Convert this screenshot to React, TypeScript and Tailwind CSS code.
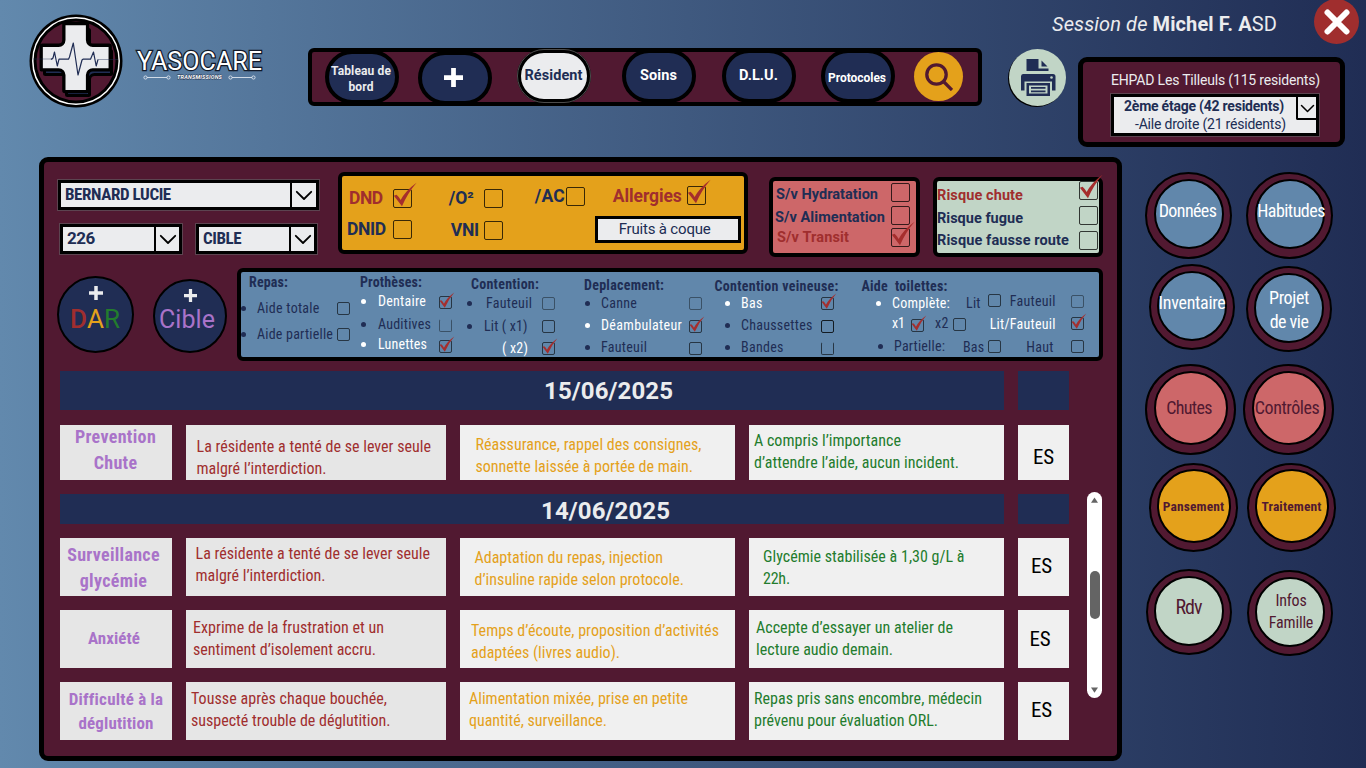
import { useLayoutEffect, useRef, useState, type ReactNode } from "react";

const COND = "[font-family:'Roboto_Condensed',Roboto,sans-serif]";
const ROBOTO = "[font-family:Roboto,sans-serif]";

/** Single line of text tracked so that it spans exactly `w` pixels. */
function Fit({ w, className = "", children }: { w: number; className?: string; children: ReactNode }) {
  const ref = useRef<HTMLSpanElement>(null);
  const [spacing, setSpacing] = useState(0);
  useLayoutEffect(() => {
    const el = ref.current;
    if (!el) return;
    el.style.letterSpacing = "0px";
    const natural = el.getBoundingClientRect().width;
    const count = (el.textContent || "").length;
    const next = count > 1 ? (w - natural) / (count - 0.5) : 0;
    el.style.letterSpacing = `${next}px`;
    setSpacing(next);
  }, [w]);
  return (
    <span ref={ref} className={`inline-block shrink-0 whitespace-pre ${className}`} style={{ letterSpacing: spacing }}>
      {children}
    </span>
  );
}

function Box({ on = false, size = "size-[19px]", className = "", line = "border-black/75" }: { on?: boolean; size?: string; className?: string; line?: string }) {
  return (
    <span className={`relative block shrink-0 rounded-[2px] border ${line} ${size} ${className}`}>
      {on && (
        <svg viewBox="0 -8 28 28" className="absolute -left-px -top-[45%] h-[145%] w-[145%] overflow-visible">
          <path d="M1 7.5 L4 6.5 Q7 9 8.7 12.5 Q14 2 26.8 -7.2 Q17 4 10.2 19.5 Z" fill="#a52e2d" />
        </svg>
      )}
    </span>
  );
}

function Chevron({ className = "" }: { className?: string }) {
  return (
    <svg viewBox="0 0 20 12" className={className} fill="none" stroke="#000" strokeWidth="2" strokeLinecap="round" strokeLinejoin="round">
      <path d="M2 2 L10 10 L18 2" />
    </svg>
  );
}

function Select({ label, w, className = "", arrow = "w-[25px]", font = COND }: { label: string; w: number; className?: string; arrow?: string; font?: string }) {
  return (
    <div className={`flex shrink-0 border-4 border-black bg-[#ebecee] outline outline-1 -outline-offset-1 outline-[#5c4450] ${className}`}>
      <div className={`flex min-w-0 flex-1 items-center pl-1 text-[17px] font-bold text-[#202d54] ${font}`}>
        <Fit w={w}>{label}</Fit>
      </div>
      <div className={`flex items-center justify-center border-l-2 border-black ${arrow}`}>
        <Chevron className="w-[18px]" />
      </div>
    </div>
  );
}

function Plus({ className = "" }: { className?: string }) {
  return (
    <svg viewBox="0 0 20 20" className={className} fill="none" stroke="currentColor" strokeWidth="5">
      <path d="M10 0V20M0 10H20" />
    </svg>
  );
}

const CROSS =
  "M35.5 11h21a1 1 0 0 1 1 1v15a5 5 0 0 0 5 5h16a1 1 0 0 1 1 1v22a1 1 0 0 1-1 1h-16a5 5 0 0 0-5 5v15a1 1 0 0 1-1 1h-21a1 1 0 0 1-1-1v-15a5 5 0 0 0-5-5h-16a1 1 0 0 1-1-1v-22a1 1 0 0 1 1-1h16a5 5 0 0 0 5-5v-15a1 1 0 0 1 1-1z";

function Logo() {
  return (
    <svg viewBox="0 0 94 94" className="ml-[29px] mt-[14px] size-[94px] shrink-0">
      <circle cx="47" cy="47" r="46.5" fill="#000" />
      <circle cx="47" cy="47" r="43.2" fill="#000" stroke="#fff" strokeWidth="1.5" />
      <circle cx="47" cy="47" r="39.5" fill="#511931" />
      <path d={CROSS} transform="translate(3 4.500)" fill="#202d54" stroke="#000" strokeWidth="3" />
      <path d={CROSS} transform="translate(46.700 43.600) scale(1.030) translate(-46 -44)" fill="#ebecee" stroke="#000" strokeWidth="3.200" />
      <path d="M4 45H24M69 45.500H89" fill="none" stroke="#202d54" strokeOpacity="0.600" strokeWidth="0.700" />
      <path d="M22 45.500 24 44 25.500 38 28.300 52 30 45.200H39.500L40.500 43 44.300 29 49 61 53 46 54 45.200H61.500L64.500 38 67.200 52 69 45.500" fill="none" stroke="#202d54" strokeWidth="1.200" strokeLinejoin="round" />
    </svg>
  );
}

function Ornament() {
  return (
    <svg viewBox="0 0 28 5" className="h-[5px] w-[28px]" fill="none" stroke="#dfe5ee" strokeWidth="0.9">
      <circle cx="2.500" cy="2.500" r="1.600" />
      <circle cx="25.500" cy="2.500" r="1.600" />
      <path d="M4 2.500H24" />
    </svg>
  );
}

function Pill({ className, children }: { className: string; children: ReactNode }) {
  return (
    <button className={`flex h-[54px] w-[74px] shrink-0 flex-col items-center justify-center rounded-[27px] border-4 border-black font-bold ${ROBOTO} ${className}`}>
      {children}
    </button>
  );
}

function Printer() {
  return (
    <svg viewBox="0 0 36 38" className="h-[38px] w-[36px]" fill="#202d54">
      <path d="M6.500 0H18.500V9.500H28.500V12H6.500Z" />
      <path d="M21.500 1.500 27.500 7.500H21.500Z" />
      <path d="M3 15H33a2.500 2.500 0 0 1 2.500 2.500V31.500H32V22.500H4.500V31.500H1V17.500A2.500 2.500 0 0 1 3 15Z" />
      <circle cx="31.500" cy="18.500" r="1.300" fill="#c1d5c6" />
      <path d="M6.500 24H30V37H6.500Z" />
      <path d="M9 26.500H27.500V34.500H9Z" fill="#c1d5c6" />
      <path d="M11 28H25.500V29.800H11ZM11 31.500H25.500V33.200H11Z" />
    </svg>
  );
}

function Header() {
  return (
    <header className="flex h-[157px] shrink-0 items-start">
      <Logo />
      <div className="ml-[14px] mt-[47px] w-[126px] shrink-0">
        <div className={`h-[30px] text-[25px] leading-[30px] text-white [-webkit-text-stroke:2.5px_#111827] [paint-order:stroke_fill] ${ROBOTO}`}>
          <Fit w={125}>YASOCARE</Fit>
        </div>
        <div className="-mt-[2px] flex h-[5px] items-center pl-[6px]">
          <Ornament />
          <span className={`ml-[6px] text-[5.5px] font-bold italic leading-[5px] text-white [-webkit-text-stroke:0.8px_#26344f] [paint-order:stroke_fill] ${ROBOTO}`}>
            <Fit w={45}>TRANSMISSIONS</Fit>
          </span>
          <span className="ml-[6px] flex">
            <Ornament />
          </span>
        </div>
      </div>
      <nav className="ml-[45px] mt-[48px] flex h-[58px] w-[674px] shrink-0 rounded-[6px] border-4 border-black bg-[#511931]">
        <Pill className="-mt-[2px] ml-[13px] bg-[#202d54] pr-[2px] pt-[3px] text-[12px] leading-4 text-[#ebecee]">
          <Fit w={60}>Tableau de</Fit>
          <Fit w={25}>bord</Fit>
        </Pill>
        <Pill className="-mt-[1px] ml-[19px] bg-[#202d54] pb-[2px] pr-[3px] text-white">
          <Plus className="size-[19px]" />
        </Pill>
        <Pill className="-mt-[3px] ml-[25px] bg-[#ebecee] pr-px text-[14.5px] leading-4 text-[#202d54] outline outline-1 -outline-offset-1 outline-[#4c4c4c]">
          <Fit w={58}>Résident</Fit>
        </Pill>
        <Pill className="-mt-[3px] ml-[31px] bg-[#202d54] pr-px text-[14.5px] leading-4 text-white">
          <Fit w={37}>Soins</Fit>
        </Pill>
        <Pill className="-mt-[3px] ml-[26px] bg-[#202d54] pr-px text-[14.5px] leading-4 text-white">
          <Fit w={39}>D.L.U.</Fit>
        </Pill>
        <Pill className="-mt-[3px] ml-[25px] bg-[#202d54] pr-[2px] pt-[3px] text-[12px] leading-4 text-white">
          <Fit w={58}>Protocoles</Fit>
        </Pill>
        <button className="ml-[19px] flex size-[49px] shrink-0 items-center justify-center rounded-full bg-[#e4a11b]">
          <svg viewBox="0 0 28 28" className="size-[28px]" fill="none" stroke="#511931" strokeWidth="3.300">
            <circle cx="11.500" cy="11.500" r="9.700" />
            <path d="M18.500 18.500 27 27" />
          </svg>
        </button>
      </nav>
      <div className="ml-[26px] w-[358px] shrink-0">
        <div className="flex h-[45px]">
          <div className={`ml-[44px] w-[225px] pt-[10px] text-[20px] leading-7 text-[#ebecee] ${ROBOTO}`}>
            <Fit w={225}>
              <em>Session de </em>
              <b>Michel F. A</b>SD
            </Fit>
          </div>
          <button className="-mt-[1px] ml-[37px] flex size-[45px] items-center justify-center rounded-full bg-[#a02e2e]">
            <svg viewBox="0 0 26 26" className="size-[26px]" stroke="#fff" strokeWidth="6" strokeLinecap="round">
              <path d="M3.500 3.500 22.500 22.500M22.500 3.500 3.500 22.500" />
            </svg>
          </button>
        </div>
        <div className="flex items-start">
          <button className="ml-[1px] mt-[4px] flex size-[57px] shrink-0 items-center justify-center rounded-full bg-[#c1d5c6] shadow-[-1px_1px_0_#000]">
            <Printer />
          </button>
          <section className="ml-[12px] mt-[12px] h-[90px] w-[267px] shrink-0 rounded-[9px] border-[5px] border-black bg-[#511931] pl-[27px] pt-[8px]">
            <div className={`h-[23px] pl-[1px] text-[14px] leading-[21px] text-[#ebecee] ${ROBOTO}`}>
              <Fit w={209}>EHPAD Les Tilleuls (115 residents)</Fit>
            </div>
            <div className={`flex h-[44px] w-[210px] border-4 border-black bg-[#ebecee] text-[14px] text-[#202d54] outline outline-1 -outline-offset-1 outline-[#5c4450] ${ROBOTO}`}>
              <div className="flex w-[182px] shrink-0 flex-col items-start pl-[10px] leading-[18px]">
                <Fit w={160} className="font-bold">2ème étage (42 residents)</Fit>
                <Fit w={151} className="ml-[11px]">-Aile droite (21 résidents)</Fit>
              </div>
              <div className="-mt-px flex h-[24px] w-[21px] items-center justify-center rounded-bl-[2px] border-b-2 border-l-2 border-t border-black">
                <Chevron className="mt-px w-[15px]" />
              </div>
            </div>
          </section>
        </div>
      </div>
    </header>
  );
}

function Alerts() {
  return (
    <section className={`ml-[18px] mt-[10px] h-[82px] w-[410px] shrink-0 rounded-[6px] border-4 border-black bg-[#e4a11b] text-[17.5px] font-bold leading-5 text-[#202d54] ${ROBOTO}`}>
      <div className="flex h-[40px] items-center pt-[4px]">
        <Fit w={34} className="ml-[7px] text-[#a02e2e]">DND</Fit>
        <Box on className="ml-[10px]" />
        <Fit w={25} className="-mt-px ml-[37px]">/O²</Fit>
        <Box className="ml-[10px]" />
        <Fit w={30} className="-mt-[4px] ml-[32px]">/AC</Fit>
        <Box className="-mt-[4px] ml-[1px]" />
        <Fit w={69} className="-mt-[5px] ml-[28px] text-[#a02e2e]">Allergies</Fit>
        <Box on className="-mt-[6px] ml-[5px]" />
      </div>
      <div className="flex h-[27px] items-center">
        <Fit w={39} className="-mt-[2px] ml-[5px]">DNID</Fit>
        <Box className="ml-[7px]" />
        <Fit w={28} className="ml-[39px]">VNI</Fit>
        <Box className="ml-[5px] mt-[2px]" />
        <div className="ml-[92px] flex h-[27px] w-[146px] items-center justify-center border-[3px] border-black bg-[#ebecee] pb-[2px] pr-[6px] text-[15px] font-normal">
          <Fit w={92}>Fruits à coque</Fit>
        </div>
      </div>
    </section>
  );
}

function Watch() {
  return (
    <section className={`ml-[21px] mt-[15px] flex h-[80px] w-[151px] shrink-0 rounded-[6px] border-4 border-black bg-[#cd6769] text-[14.5px] font-bold leading-5 text-[#202d54] ${ROBOTO}`}>
      <div className="flex w-[118px] shrink-0 flex-col items-start pl-[2px] pt-[4px]">
        <Fit w={102} className="ml-px">S/v Hydratation</Fit>
        <Fit w={110} className="mt-[3px]">S/v Alimentation</Fit>
        <Fit w={72} className="ml-[2px] text-[#a02e2e]">S/v Transit</Fit>
      </div>
      <div className="flex flex-col gap-[3.500px] pt-[2px]">
        <Box />
        <Box />
        <Box on />
      </div>
    </section>
  );
}

function Risks() {
  return (
    <section className={`ml-[13px] mt-[15px] flex h-[80px] w-[170px] shrink-0 rounded-[6px] border-4 border-black bg-[#c1d5c6] text-[14.5px] font-bold leading-5 text-[#202d54] ${ROBOTO}`}>
      <div className="flex w-[142px] shrink-0 flex-col items-start pt-[5px]">
        <Fit w={86} className="text-[#a02e2e]">Risque chute</Fit>
        <Fit w={86} className="mt-[3px]">Risque fugue</Fit>
        <Fit w={132} className="mt-[2px]">Risque fausse route</Fit>
      </div>
      <div className="flex flex-col gap-[6px]">
        <Box on />
        <Box />
        <Box />
      </div>
    </section>
  );
}

function Dot({ className = "" }: { className?: string }) {
  return <span className={`block size-[5px] shrink-0 rounded-full bg-current ${className}`} />;
}

type Item = { text: string; w: number; on?: boolean; dot?: string; gap?: string; row: string; box?: string; line?: string };

function Group({ title, tw, className, titleClass, items, end }: { title: string; tw: number; className: string; titleClass: string; items: Item[]; end: string }) {
  return (
    <div className={`flex shrink-0 flex-col ${className}`}>
      <div className={`flex h-5 shrink-0 items-center font-bold ${titleClass}`}>
        <Fit w={tw}>{title}</Fit>
      </div>
      {items.map((it) => (
        <div key={it.text} className={`flex h-5 shrink-0 items-center ${it.row} ${end} ${it.on ? "text-white" : ""}`}>
          {it.dot !== "none" && <Dot className={it.dot} />}
          <Fit w={it.w} className={it.gap || "ml-[11px]"}>{it.text}</Fit>
          <Box on={it.on} size="size-[13px]" className={`ml-auto ${it.box || ""}`} line={it.line || "border-black/60"} />
        </div>
      ))}
    </div>
  );
}

function Care() {
  const s = "size-[13px]";
  const l = "border-black/60";
  return (
    <section className={`ml-[10px] flex h-[93px] w-[866px] shrink-0 rounded-[6px] border-4 border-black bg-[#6187ab] text-[14px] leading-5 text-[#202d54] ${COND}`}>
      <Group title="Repas:" tw={39} className="w-[119px]" titleClass="pl-[8px]" end="pr-[10px]" items={[
        { text: "Aide totale", w: 62.5, row: "mt-[6px]" },
        { text: "Aide partielle", w: 76, row: "mt-[6px]" },
      ]} />
      <Group title="Prothèses:" tw={62} className="w-[107px]" titleClass="" end="pl-[1px] pr-[15px]" items={[
        { text: "Dentaire", w: 48, on: true, row: "-mt-[1px]", gap: "ml-[12px]", box: "mt-[2px]" },
        { text: "Auditives", w: 53, row: "mt-[3px]", gap: "ml-[12px]", line: "border-black/40 border-t-transparent", box: "mt-[2px]" },
        { text: "Lunettes", w: 49, on: true, row: "", gap: "ml-[12px]", box: "mt-[4px]" },
      ]} />
      <Group title="Contention:" tw={68} className="w-[117px]" titleClass="mt-[2px] pl-[4px]" end="pl-[0px] pr-[29px]" items={[
        { text: "Fauteuil", w: 46, row: "-mt-[1px]", gap: "ml-[14px]", line: "border-black/40", box: "mt-[1px]" },
        { text: "Lit ( x1)", w: 43.5, row: "mt-[3px]", gap: "ml-[12px]" },
        { text: "( x2)", w: 26, on: true, row: "mt-[2px]", dot: "none", gap: "ml-[35px]" },
      ]} />
      <Group title="Deplacement:" tw={80} className="w-[130px]" titleClass="mt-[3px]" end="pl-[1px] pr-[12px]" items={[
        { text: "Canne", w: 36, row: "-mt-[2px]", line: "border-black/40", box: "mt-[1px]" },
        { text: "Déambulateur", w: 81, on: true, row: "mt-[2px]", box: "mt-[3px]" },
        { text: "Fauteuil", w: 46, row: "mt-[2px]", box: "mt-[2px]" },
      ]} />
      <Group title="Contention veineuse:" tw={124} className="w-[147px]" titleClass="mt-[4px] pl-[0.500px]" end="pl-[11px] pr-[27px]" items={[
        { text: "Bas", w: 21.5, on: true, row: "-mt-[3px]", box: "mt-[1px]" },
        { text: "Chaussettes", w: 71.5, row: "mt-[2px]", box: "mt-[3px]", line: "border-black/80" },
        { text: "Bandes", w: 42.5, row: "mt-[2px]", line: "border-black/60 border-t-transparent", box: "mt-[3px]" },
      ]} />
      <div className="flex w-[238px] shrink-0 flex-col">
        <div className="mt-[4px] flex h-5 shrink-0 items-center pl-[0.500px] font-bold">
          <Fit w={86}>Aide  toilettes:</Fit>
        </div>
        <div className="-mt-[3px] flex h-5 shrink-0 items-center pl-[15px]">
          <Dot className="text-white" />
          <Fit w={58} className="ml-[11px] text-white">Complète:</Fit>
          <Fit w={14.5} className="ml-[16px]">Lit</Fit>
          <Box size={s} line={l} className="-mt-[5px] ml-[7px]" />
          <Fit w={46} className="-mt-[4px] ml-[9px]">Fauteuil</Fit>
          <Box size={s} line="border-black/40" className="-mt-[4px] ml-[15px]" />
        </div>
        <div className="flex h-5 shrink-0 items-center pl-[31px] text-white">
          <Fit w={13}>x1</Fit>
          <Box on size={s} line={l} className="ml-[6px] mt-[5px]" />
          <Fit w={13.5} className="ml-[11px] text-[#202d54]">x2</Fit>
          <Box size={s} line={l} className="ml-[4px] mt-[3px]" />
          <Fit w={66} className="ml-[24px] mt-[1px]">Lit/Fauteuil</Fit>
          <Box on size={s} line={l} className="ml-[15px] mt-[1px]" />
        </div>
        <div className="mt-[3px] flex h-5 shrink-0 items-center pl-[17px]">
          <Dot />
          <Fit w={51} className="ml-[11px]">Partielle:</Fit>
          <Fit w={21} className="ml-[18px] mt-[2px]">Bas</Fit>
          <Box size={s} line={l} className="ml-[4px]" />
          <Fit w={27.5} className="ml-[25px] mt-[2px]">Haut</Fit>
          <Box size={s} line={l} className="ml-[17px]" />
        </div>
      </div>
    </section>
  );
}

function Banner({ date, className, w }: { date: string; className: string; w: string }) {
  return (
    <div className={`flex shrink-0 gap-[14px] ${className}`}>
      <div className={`flex w-[944px] items-center bg-[#202d54] text-[24px] font-bold leading-none text-[#ebecee] ${ROBOTO} ${w}`}>
        <Fit w={129}>{date}</Fit>
      </div>
      <div className="w-[51px] bg-[#202d54]" />
    </div>
  );
}

type Line = [string, number];
type Entry = {
  row: string;
  topic: { cls: string; lines: Line[] };
  data: { cls: string; lines: Line[] };
  action: { cls: string; lines: Line[] };
  result: { cls: string; lines: Line[] };
  sign: string;
};

const ENTRIES: Entry[] = [
  {
    row: "mt-[14.500px] h-[55px]",
    topic: { cls: "pr-px text-[18px] leading-[26px] -mt-[5px]", lines: [["Prevention", 81], ["Chute", 43.5]] },
    data: { cls: "pl-[10.500px] pt-[11px]", lines: [["La résidente a tenté de se lever seule", 234.5], ["malgré l’interdiction.", 130]] },
    action: { cls: "pl-[15.500px] pt-[9px]", lines: [["Réassurance, rappel des consignes,", 226], ["sonnette laissée à portée de main.", 217.5]] },
    result: { cls: "pl-[5px] pt-[5px]", lines: [["A compris l’importance", 147], ["d’attendre l’aide, aucun incident.", 205]] },
    sign: "pl-[15px] pt-[9px]",
  },
  {
    row: "mt-[14px] h-[58px]",
    topic: { cls: "pr-[5px] pt-[2px] text-[18px] leading-[26px]", lines: [["Surveillance", 92.5], ["glycémie", 67.5]] },
    data: { cls: "pl-[9.500px] pt-[5px]", lines: [["La résidente a tenté de se lever seule", 234.5], ["malgré l’interdiction.", 130]] },
    action: { cls: "pl-[14.500px] pt-[9px]", lines: [["Adaptation du repas, injection", 188.5], ["d’insuline rapide selon protocole.", 209.5]] },
    result: { cls: "pl-[14px] pt-[8px]", lines: [["Glycémie stabilisée à 1,30 g/L à", 201.5], ["22h.", 27]] },
    sign: "pl-[13px] pb-[2px]",
  },
  {
    row: "mt-[14px] h-[58px]",
    topic: { cls: "pr-[4px] pb-px text-[17px] leading-6", lines: [["Anxiété", 52]] },
    data: { cls: "pl-[7px] pt-[7px]", lines: [["Exprime de la frustration et un", 191], ["sentiment d’isolement accru.", 183]] },
    action: { cls: "pl-[11px] pt-[10px]", lines: [["Temps d’écoute, proposition d’activités", 248], ["adaptées (livres audio).", 149]] },
    result: { cls: "pl-[7px] pt-[7px]", lines: [["Accepte d’essayer un atelier de", 197], ["lecture audio demain.", 137]] },
    sign: "pl-[11.500px]",
  },
  {
    row: "mt-[14px] h-[58px]",
    topic: { cls: "text-[17px] leading-6", lines: [["Difficulté à la", 93], ["déglutition", 75]] },
    data: { cls: "pl-[5px] pt-[6px]", lines: [["Tousse après chaque bouchée,", 196], ["suspecté trouble de déglutition.", 199.5]] },
    action: { cls: "pl-[9px] pt-[6px]", lines: [["Alimentation mixée, prise en petite", 219], ["quantité, surveillance.", 138]] },
    result: { cls: "pl-[5px] pt-[6px]", lines: [["Repas pris sans encombre, médecin", 228], ["prévenu pour évaluation ORL.", 184]] },
    sign: "pl-[13px] pb-[2px]",
  },
];

function Lines({ lines }: { lines: Line[] }) {
  return (
    <>
      {lines.map(([text, w]) => (
        <Fit key={text} w={w}>{text}</Fit>
      ))}
    </>
  );
}

function Row({ e }: { e: Entry }) {
  return (
    <div className={`flex shrink-0 text-[16px] leading-[22px] ${COND} ${e.row}`}>
      <div className="flex w-[112px] flex-col bg-[#e6e6e6]">
        <div className={`flex flex-1 flex-col items-center justify-center font-bold text-[#a973c9] ${e.topic.cls}`}>
          <Lines lines={e.topic.lines} />
        </div>
      </div>
      <div className={`ml-[14px] flex w-[260px] flex-col items-start bg-[#e6e6e6] text-[#a02e2e] ${e.data.cls}`}>
        <Lines lines={e.data.lines} />
      </div>
      <div className={`ml-[14px] flex w-[275px] flex-col items-start bg-[#f0f0f0] text-[#e4a11b] ${e.action.cls}`}>
        <Lines lines={e.action.lines} />
      </div>
      <div className={`ml-[14px] flex w-[255px] flex-col items-start bg-[#f0f0f0] text-[#237c2d] ${e.result.cls}`}>
        <Lines lines={e.result.lines} />
      </div>
      <div className={`ml-[14px] flex w-[51px] items-center bg-[#f0f0f0] text-[21px] text-black ${e.sign}`}>
        <Fit w={21}>ES</Fit>
      </div>
    </div>
  );
}

function Journal() {
  return (
    <div className="mt-[10px] flex pl-[16px]">
      <div className="flex w-[1009px] shrink-0 flex-col">
        <Banner date="15/06/2025" className="h-[39px]" w="pl-[484px]" />
        <Row e={ENTRIES[0]} />
        <Banner date="14/06/2025" className="mt-[14px] h-[30px]" w="pl-[481px] pt-[5px]" />
        {ENTRIES.slice(1).map((e) => (
          <Row key={e.topic.lines[0][0]} e={e} />
        ))}
      </div>
      <div className="ml-[18px] mt-[121px] flex h-[206px] w-[15px] shrink-0 flex-col items-center rounded-full bg-white py-[5px]">
        <svg viewBox="0 0 8 6" className="h-[6px] w-[7px]" fill="#646464"><path d="M4 0 8 6H0Z" /></svg>
        <div className="mt-[68px] h-[48px] w-[10px] rounded-full bg-[#646464]" />
        <svg viewBox="0 0 8 6" className="mt-auto h-[6px] w-[7px]" fill="#646464"><path d="M0 0H8L4 6Z" /></svg>
      </div>
    </div>
  );
}

function Orb({ className, inner, children }: { className: string; inner: string; children: ReactNode }) {
  return (
    <button className={`flex shrink-0 justify-center rounded-full border-2 border-black bg-[#511931] ${COND} ${className}`}>
      <span className={`flex shrink-0 flex-col items-center justify-center rounded-full border-2 border-black ${inner}`}>{children}</span>
    </button>
  );
}

function Sidebar() {
  const blue = "mt-[5px] size-[70px] bg-[#6187ab] text-white";
  return (
    <aside className="w-[245px] shrink-0 text-[18px] leading-6">
      <div className="mt-[15px] flex h-[87px] items-start pl-[23px]">
        <Orb className="size-[87px]" inner={`${blue} pb-[6px] pr-[2px]`}><Fit w={58}>Données</Fit></Orb>
        <Orb className="ml-[14px] size-[87px]" inner={`${blue} pb-[6px] pl-[3px]`}><Fit w={68}>Habitudes</Fit></Orb>
      </div>
      <div className="mt-[5px] flex h-[89px] items-start pl-[27px]">
        <Orb className="size-[86px]" inner={`${blue} pb-[6px]`}><Fit w={67}>Inventaire</Fit></Orb>
        <Orb className="ml-[11px] mt-[2px] size-[86px]" inner={`${blue} pt-[4px]`}><Fit w={40}>Projet</Fit><Fit w={39}>de vie</Fit></Orb>
      </div>
      <div className="mt-[11px] flex h-[91px] items-start pl-[23px]">
        <Orb className="size-[91px]" inner="mt-[5px] size-[74px] bg-[#cd6769] pr-[3px] text-[#511931]"><Fit w={46}>Chutes</Fit></Orb>
        <Orb className="ml-[7px] size-[91px]" inner="mt-[5px] size-[74px] bg-[#cd6769] pr-[3px] text-[#511931]"><Fit w={64.5}>Contrôles</Fit></Orb>
      </div>
      <div className="mt-[8px] flex h-[89px] items-start pl-[27px] text-[13.5px] font-bold">
        <Orb className="size-[89px]" inner="mt-[4px] size-[74px] bg-[#e4a11b] text-[#511931]"><Fit w={61.5}>Pansement</Fit></Orb>
        <Orb className="ml-[9px] size-[89px]" inner="mt-[4px] size-[74px] bg-[#e4a11b] text-[#511931]"><Fit w={60}>Traitement</Fit></Orb>
      </div>
      <div className="mt-[17px] flex items-start pl-[24px]">
        <Orb className="size-[86px] text-[20px]" inner="mt-[5px] size-[70px] bg-[#c1d5c6] pb-[8px] pr-px text-[#511931]"><Fit w={26.5}>Rdv</Fit></Orb>
        <Orb className="ml-[15px] mt-[1px] size-[86px] text-[16px] leading-[22px]" inner="mt-[5px] size-[70px] bg-[#c1d5c6] pl-[2px] text-[#511931]"><Fit w={31}>Infos</Fit><Fit w={44.5}>Famille</Fit></Orb>
      </div>
    </aside>
  );
}

export default function App() {
  return (
    <div className="flex h-[768px] w-[1366px] flex-col overflow-hidden bg-linear-to-r from-[#6289ad] to-[#202d54]">
      <Header />
      <div className="flex min-h-0 flex-1 items-start">
        <main className="ml-[39px] h-[604px] w-[1083px] shrink-0 rounded-[9px] border-[5px] border-black bg-[#511931]">
          <div className="flex h-[106px] items-start">
            <div className="ml-[13px] mt-[17px] w-[263px] shrink-0">
              <Select label="BERNARD LUCIE" w={106} className="h-[32px]" arrow="w-[26px]" />
              <div className="mt-[12px] flex gap-[12px] pl-[2px]">
                <Select label="226" w={28} className="h-[32px] w-[124px]" font={ROBOTO} />
                <Select label="CIBLE" w={38.5} className="h-[32px] w-[123px]" />
              </div>
            </div>
            <Alerts />
            <Watch />
            <Risks />
          </div>
          <div className="flex h-[93px] items-start">
            <button className={`ml-[13px] mt-[8px] flex size-[77px] shrink-0 flex-col items-center rounded-full border-2 border-black bg-[#202d54] pt-[8px] text-[26px] leading-[30px] ${ROBOTO}`}>
              <Plus className="size-[14px] text-[#ebecee]" />
              <Fit w={50} className="mr-[1px] mt-[4px]">
                <span className="font-medium text-[#a02e2e]">D</span>
                <span className="text-[#e4a11b]">A</span>
                <span className="text-[#237c2d]">R</span>
              </Fit>
            </button>
            <button className={`ml-[19px] mt-[11px] flex size-[74px] shrink-0 flex-col items-center rounded-full border-2 border-black bg-[#202d54] pt-[8px] text-[25px] leading-[30px] text-[#a973c9] ${ROBOTO}`}>
              <Plus className="size-[13px] text-[#ebecee]" />
              <Fit w={56} className="mr-[6px] mt-[3px]">Cible</Fit>
            </button>
            <Care />
          </div>
          <Journal />
        </main>
        <Sidebar />
      </div>
    </div>
  );
}
